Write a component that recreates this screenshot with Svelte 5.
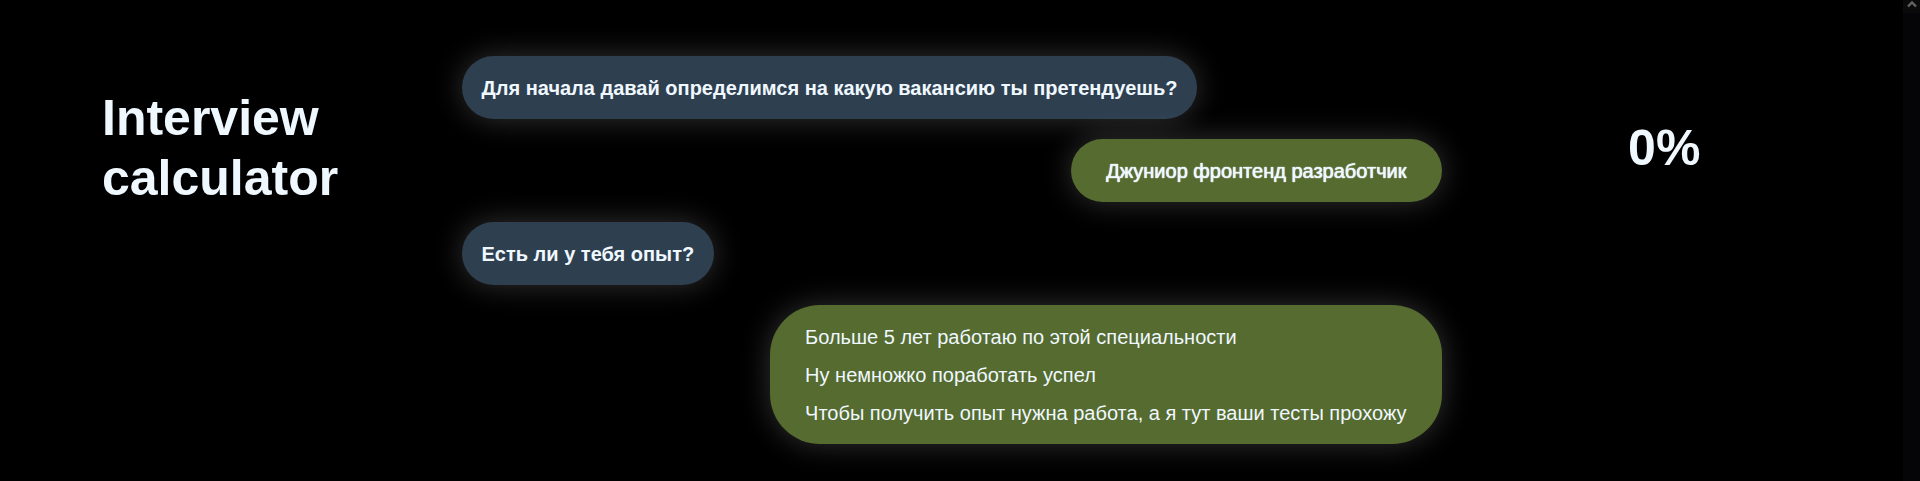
<script>
  const score = 0;
  const options = [
    'Больше 5 лет работаю по этой специальности',
    'Ну немножко поработать успел',
    'Чтобы получить опыт нужна работа, а я тут ваши тесты прохожу'
  ];
</script>

<div class="page">
  <main>
    <h1>Interview calculator</h1>
    <section class="chat">
      <p class="bubble question">Для начала давай определимся на какую вакансию ты претендуешь?</p>
      <div class="bubble answer">
        <button type="button" class="chosen">Джуниор фронтенд разработчик</button>
      </div>
      <p class="bubble question">Есть ли у тебя опыт?</p>
      <div class="bubble answer">
        {#each options as option}
          <button type="button">{option}</button>
        {/each}
      </div>
    </section>
    <output>{score}%</output>
  </main>
  <div class="scrollbar" aria-hidden="true">
    <div class="arrow">
      <svg width="10" height="8" viewBox="0 0 10 8"><path d="M1 6.5 5 2.5 9 6.5" fill="none" stroke="#646464" stroke-width="2.4" /></svg>
    </div>
  </div>
</div>

<style>
  :global(body) {
    background: #000;
  }

  .page {
    display: flex;
    min-height: 100vh;
    background: #000;
    color: aliceblue;
    font-family: 'Liberation Sans', Arial, sans-serif;
    font-size: 20px;
    line-height: 23px;
  }

  main {
    flex: 1;
    display: grid;
    grid-template-columns: 1fr minmax(0, 980px) 1fr;
    align-items: start;
  }

  h1,
  output {
    font-size: 50px;
    font-weight: 700;
    line-height: 60px;
  }

  h1 {
    margin: 0;
    padding: 88px 100px 0 102px;
  }

  output {
    padding: 118px 16px 0 0;
    text-align: center;
  }

  .chat {
    display: flex;
    flex-direction: column;
    gap: 20px;
    padding: 56px 0 36px;
  }

  .bubble {
    margin: 0;
    border-radius: 50px;
    box-shadow: 0 0 30px rgba(255, 255, 255, 0.2);
  }

  .question {
    align-self: flex-start;
    padding: 21px 20px 19px;
    background: #2e3f50;
    font-weight: 700;
  }

  .answer {
    align-self: flex-end;
    display: flex;
    flex-direction: column;
    align-items: flex-start;
    gap: 15px;
    padding: 21px 35px 19px;
    background: #556b2f;
  }

  button {
    padding: 0;
    border: 0;
    background: none;
    color: inherit;
    font: inherit;
    text-align: left;
    cursor: pointer;
  }

  .chosen {
    text-shadow: 0 0 1px aliceblue, 0 0 1px aliceblue;
  }

  .scrollbar {
    width: 17px;
    background: #050507;
  }

  .arrow {
    display: flex;
    justify-content: center;
    height: 13px;
    background: #0a0a0b;
  }
</style>
